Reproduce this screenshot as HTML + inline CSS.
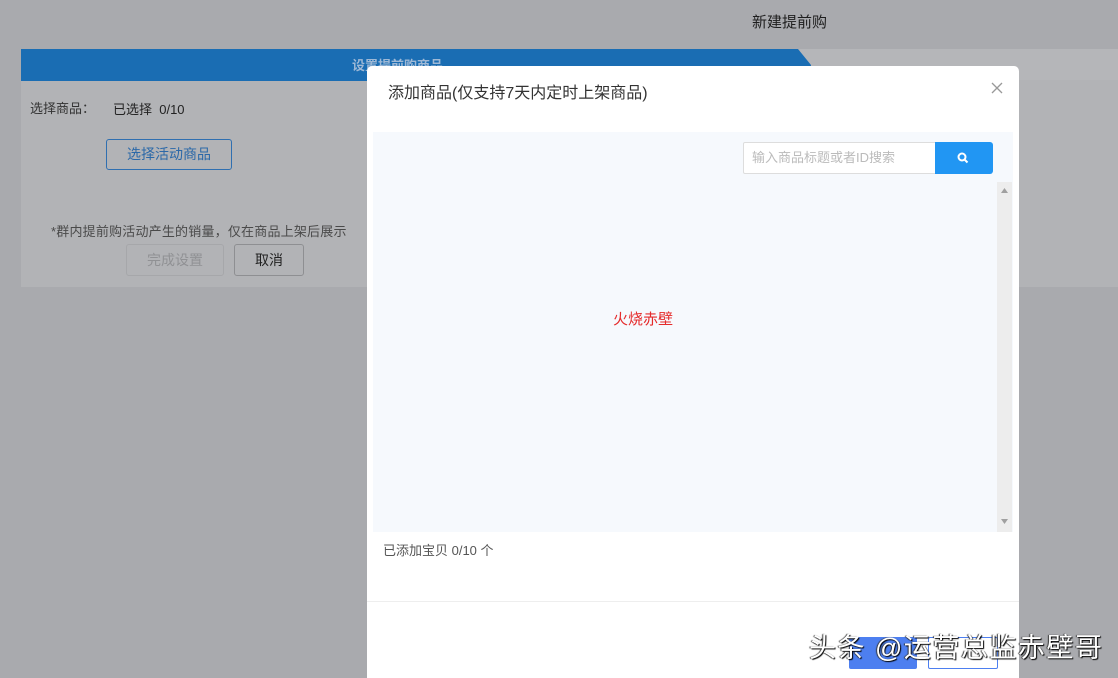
<!DOCTYPE html>
<html><head><meta charset="utf-8"><style>
*{margin:0;padding:0;box-sizing:border-box}
html,body{width:1118px;height:678px;overflow:hidden}
body{background:#a9aaae;font-family:"Liberation Sans","Noto Sans CJK SC",sans-serif;position:relative;font-size:14px;color:#222}
.a{position:absolute}
</style></head><body>
<div class="a" style="left:752px;top:11px;font-size:15px;color:#1e1e1e">新建提前购</div>
<div class="a" style="left:21px;top:49px;width:1097px;height:238px;background:#b2b3b6"></div>
<div class="a" style="left:800px;top:49px;width:318px;height:31px;background:#b5b6b9"></div>
<svg class="a" style="left:21px;top:49px" width="790" height="32"><polygon points="0,0 777,0 790,16 790,32 0,32" fill="#1a6db3"/></svg>
<div class="a" style="left:352px;top:55px;color:#9fb9d6;font-size:13px;font-weight:bold">设置提前购商品</div>
<div class="a" style="left:30px;top:98px;font-size:13px;color:#333">选择商品：</div>
<div class="a" style="left:113px;top:99px;font-size:13px;color:#222">已选择&nbsp; 0/10</div>
<div class="a" style="left:106px;top:139px;width:126px;height:31px;border:1px solid #2f6fb0;border-radius:3px;color:#2b68a8;font-size:14px;text-align:center;line-height:29px">选择活动商品</div>
<div class="a" style="left:51px;top:221px;font-size:13px;color:#4a4a4a;letter-spacing:0.2px">*群内提前购活动产生的销量，仅在商品上架后展示</div>
<div class="a" style="left:126px;top:244px;width:98px;height:32px;border:1px solid #a6a7aa;border-radius:3px;color:#909194;font-size:14px;text-align:center;line-height:30px">完成设置</div>
<div class="a" style="left:234px;top:244px;width:70px;height:32px;border:1px solid #8e8f92;border-radius:3px;color:#222;font-size:14px;text-align:center;line-height:30px">取消</div>

<div class="a" style="left:367px;top:66px;width:652px;height:620px;background:#fff;border-radius:5px"></div>
<div class="a" style="left:388px;top:79px;font-size:16px;color:#333">添加商品(仅支持7天内定时上架商品)</div>
<svg class="a" style="left:991px;top:82px" width="12" height="12"><path d="M1 1L11 11M11 1L1 11" stroke="#999" stroke-width="1.3"/></svg>
<div class="a" style="left:373px;top:132px;width:640px;height:400px;background:#f6f9fd"></div>
<div class="a" style="left:743px;top:142px;width:193px;height:32px;border:1px solid #ddd;background:#fff;border-radius:2px 0 0 2px;color:#bbb;font-size:13px;line-height:30px;padding-left:8px">输入商品标题或者ID搜索</div>
<div class="a" style="left:935px;top:142px;width:58px;height:32px;background:#2196f3;border-radius:0 3px 3px 0"></div>
<svg class="a" style="left:956px;top:151px" width="14" height="14"><circle cx="6" cy="6" r="3.5" stroke="#fff" stroke-width="2" fill="none"/><path d="M8.5 8.5L11.5 11.5" stroke="#fff" stroke-width="2"/></svg>
<div class="a" style="left:997px;top:182px;width:15px;height:350px;background:#ededed"></div>
<svg class="a" style="left:1000px;top:186px" width="9" height="340"><path d="M1 7L4.5 2L8 7Z" fill="#a0a0a0"/><path d="M1 333L4.5 338L8 333Z" fill="#a0a0a0"/></svg>
<div class="a" style="left:613px;top:308px;font-size:15px;color:#e52b2b">火烧赤壁</div>
<div class="a" style="left:383px;top:540px;font-size:13px;color:#555">已添加宝贝 0/10 个</div>
<div class="a" style="left:367px;top:601px;width:652px;height:1px;background:#eee"></div>
<div class="a" style="left:849px;top:637px;width:68px;height:32px;background:#4d7ff0;border-radius:2px"></div>
<div class="a" style="left:928px;top:637px;width:70px;height:32px;border:1px solid #4d7ff0;border-radius:2px;background:#fff"></div>
<div class="a" style="left:809px;top:626px;font-size:27px;color:#fff;text-shadow:1px 1px 1px #000,-1px 0 1px #333;letter-spacing:1.5px;white-space:nowrap">头条 @运营总监赤壁哥</div>
</body></html>
